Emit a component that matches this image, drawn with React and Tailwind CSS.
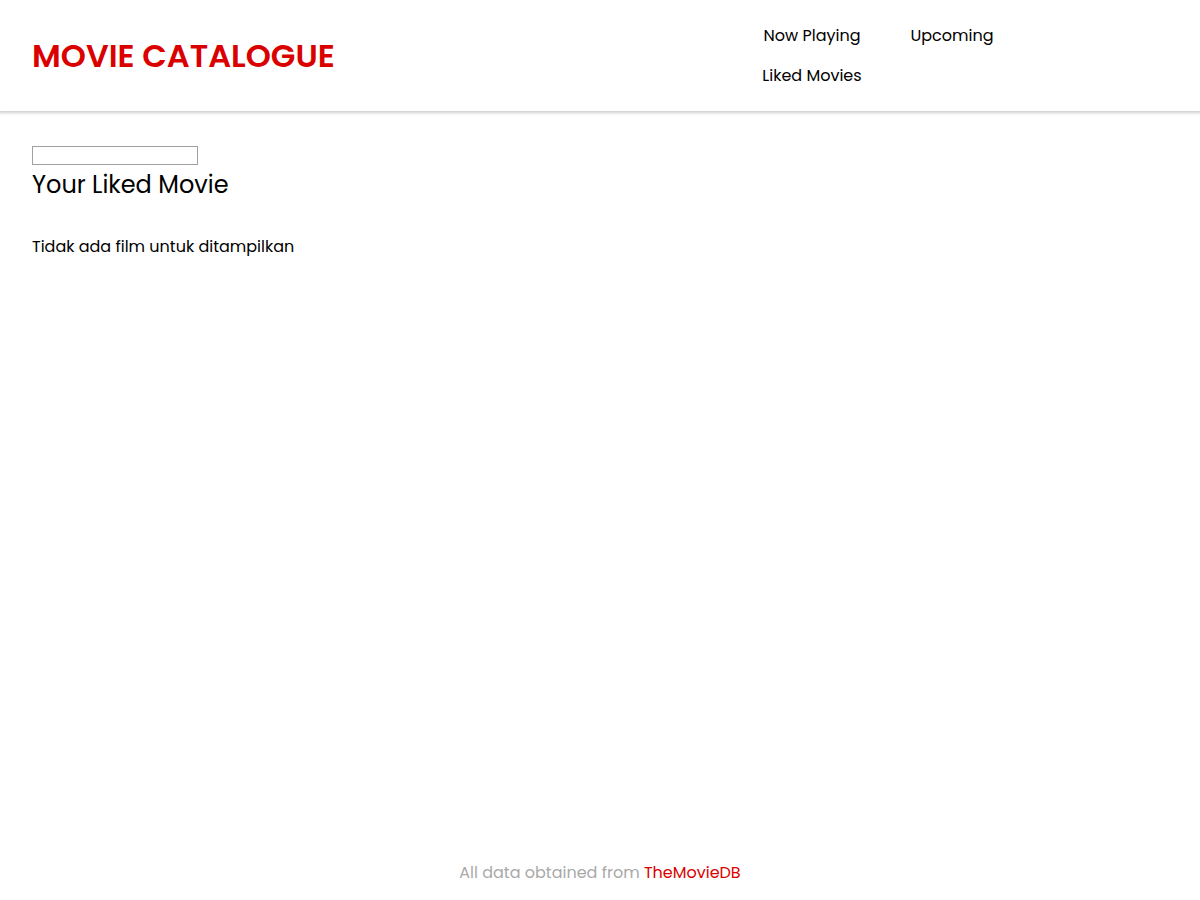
const navItems = ['Now Playing', 'Upcoming', 'Liked Movies'];

export default function App() {
  return (
    <div className="flex min-h-screen flex-col bg-white font-['Poppins','Inter',sans-serif] text-base text-black">
      <header className="grid grid-cols-[5fr_3fr] items-center px-8 pt-4 pb-[15px] shadow-[0_1px_3px_1px_rgba(0,0,0,0.2)]">
        <h1 className="text-[32px] leading-12 font-semibold text-[#db0000]">MOVIE CATALOGUE</h1>
        <nav>
          <ul className="grid grid-cols-[140px_140px] text-center">
            {navItems.map((item) => (
              <li key={item}>
                <a href="#" className="block leading-10 whitespace-nowrap">{item}</a>
              </li>
            ))}
          </ul>
        </nav>
      </header>
      <main className="flex-1 px-8 pt-[35px]">
        <input type="text" aria-label="Search movies" className="block h-[19px] w-[166px] border border-[#a0a0a0] bg-white px-1 text-xs" />
        <h2 className="mt-0.5 text-2xl leading-9">Your Liked Movie</h2>
        <p className="mt-8 leading-6">Tidak ada film untuk ditampilkan</p>
      </main>
      <footer className="pt-4 pb-[15px] text-center leading-6 text-[#a9a9a9]">
        All data obtained from <a href="#" className="text-[#db0000]">TheMovieDB</a>
      </footer>
    </div>
  );
}
